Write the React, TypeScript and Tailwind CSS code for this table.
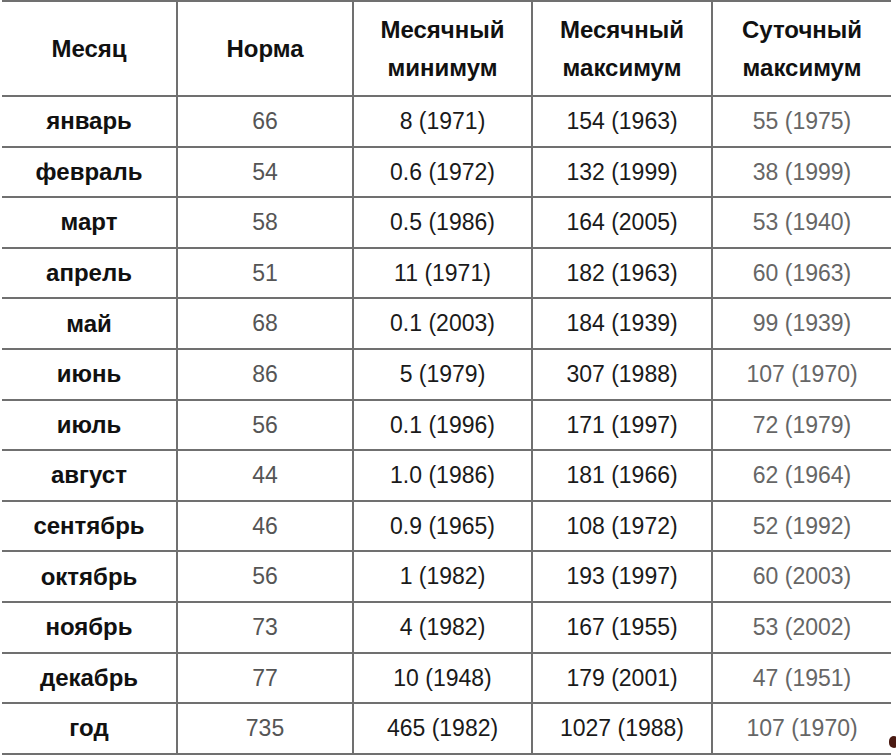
import React from 'react'

type Row = {
  month: string
  norm: string
  min: string
  max: string
  daily: string
}

const rows: Row[] = [
  { month: 'январь', norm: '66', min: '8 (1971)', max: '154 (1963)', daily: '55 (1975)' },
  { month: 'февраль', norm: '54', min: '0.6 (1972)', max: '132 (1999)', daily: '38 (1999)' },
  { month: 'март', norm: '58', min: '0.5 (1986)', max: '164 (2005)', daily: '53 (1940)' },
  { month: 'апрель', norm: '51', min: '11 (1971)', max: '182 (1963)', daily: '60 (1963)' },
  { month: 'май', norm: '68', min: '0.1 (2003)', max: '184 (1939)', daily: '99 (1939)' },
  { month: 'июнь', norm: '86', min: '5 (1979)', max: '307 (1988)', daily: '107 (1970)' },
  { month: 'июль', norm: '56', min: '0.1 (1996)', max: '171 (1997)', daily: '72 (1979)' },
  { month: 'август', norm: '44', min: '1.0 (1986)', max: '181 (1966)', daily: '62 (1964)' },
  { month: 'сентябрь', norm: '46', min: '0.9 (1965)', max: '108 (1972)', daily: '52 (1992)' },
  { month: 'октябрь', norm: '56', min: '1 (1982)', max: '193 (1997)', daily: '60 (2003)' },
  { month: 'ноябрь', norm: '73', min: '4 (1982)', max: '167 (1955)', daily: '53 (2002)' },
  { month: 'декабрь', norm: '77', min: '10 (1948)', max: '179 (2001)', daily: '47 (1951)' },
  { month: 'год', norm: '735', min: '465 (1982)', max: '1027 (1988)', daily: '107 (1970)' },
]

export default function App() {
  return (
    <div
      className="relative w-[896px] h-[756px] bg-white overflow-hidden"
      style={{ fontFamily: '"Liberation Sans", Arial, sans-serif' }}
    >
      <table className="ml-[2px] w-[889px] border-collapse table-fixed text-center">
        <colgroup>
          <col className="w-[175px]" />
          <col className="w-[176px]" />
          <col className="w-[179px]" />
          <col className="w-[180px]" />
          <col className="w-[179px]" />
        </colgroup>
        <thead>
          <tr className="h-[95px] text-[24px] font-bold leading-[38px] text-[#111]">
            <th className="border-y-2 border-[#707070]">Месяц</th>
            <th className="border-y-2 border-l-2 border-[#707070]">Норма</th>
            <th className="border-y-2 border-l-2 border-[#707070]">
              Месячный
              <br />
              минимум
            </th>
            <th className="border-y-2 border-l-2 border-[#707070]">
              Месячный
              <br />
              максимум
            </th>
            <th className="border-y-2 border-l-2 border-[#707070]">
              Суточный
              <br />
              максимум
            </th>
          </tr>
        </thead>
        <tbody>
          {rows.map(r => (
            <tr key={r.month} className="h-[50.6px] text-[23px]">
              <td className="border-y-2 border-[#707070] text-[24px] font-bold text-[#111]">{r.month}</td>
              <td className="border-y-2 border-l-2 border-[#707070] text-[#555]">{r.norm}</td>
              <td className="border-y-2 border-l-2 border-[#707070] text-[#1a1a1a]">{r.min}</td>
              <td className="border-y-2 border-l-2 border-[#707070] text-[#1a1a1a]">{r.max}</td>
              <td className="border-y-2 border-l-2 border-[#707070] text-[#666]">{r.daily}</td>
            </tr>
          ))}
        </tbody>
      </table>

      {/* cropped dot at the bottom right edge */}
      <div className="absolute left-[889px] top-[736px] w-[10px] h-[12px] rounded-full bg-[#4a1a12]" />
    </div>
  )
}
